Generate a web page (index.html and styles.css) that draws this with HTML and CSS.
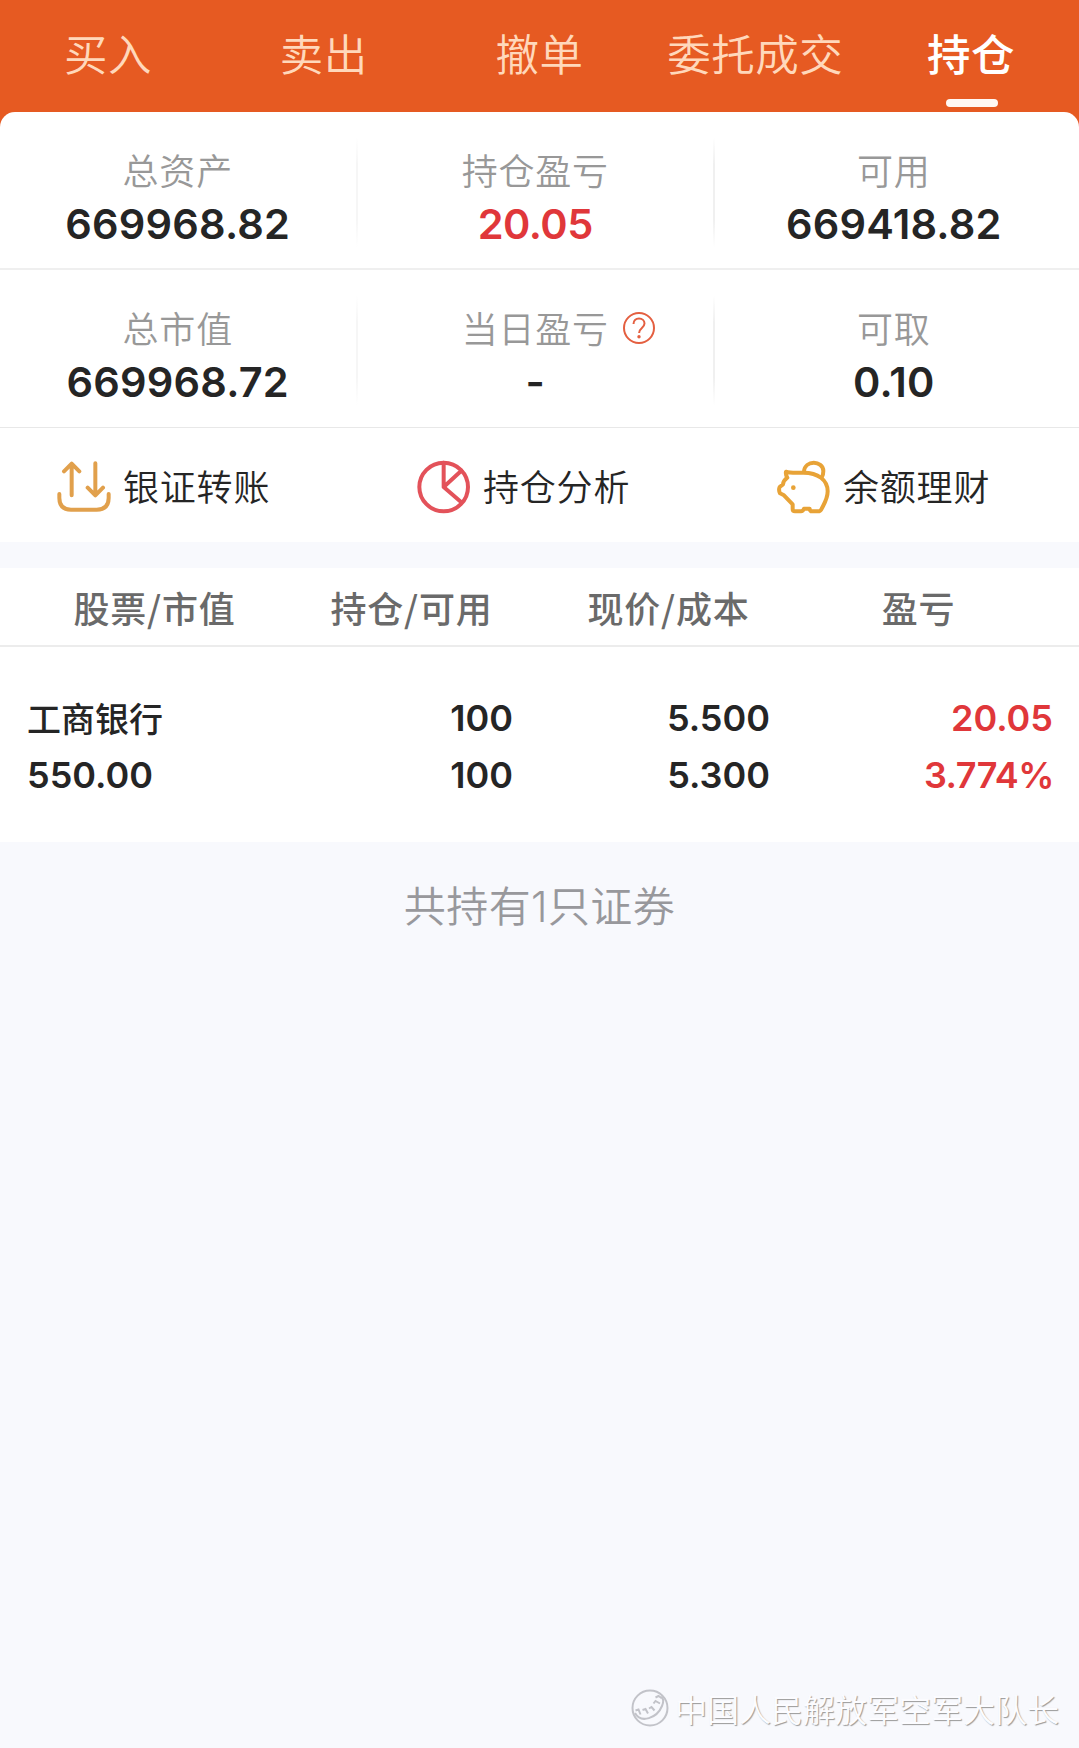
FILE: index.html
```html
<!DOCTYPE html>
<html lang="zh-CN">
<head>
<meta charset="utf-8">
<title>持仓</title>
<link rel="stylesheet" href="styles.css">
</head>
<body>
<header class="top">
  <nav class="tabs">
    <a class="tab">买入</a>
    <a class="tab">卖出</a>
    <a class="tab">撤单</a>
    <a class="tab">委托成交</a>
    <a class="tab tab-active">持仓</a>
  </nav>
</header>
<main>
  <section class="card">
    <div class="summary">
      <div class="cell"><span class="label">总资产</span><span class="value">669968.82</span></div>
      <div class="cell"><span class="label">持仓盈亏</span><span class="value up">20.05</span></div>
      <div class="cell"><span class="label">可用</span><span class="value">669418.82</span></div>
    </div>
    <div class="summary summary-second">
      <div class="cell"><span class="label">总市值</span><span class="value">669968.72</span></div>
      <div class="cell"><span class="label">当日盈亏<svg class="help" viewBox="0 0 34 34"><circle cx="17" cy="17" r="15"/><path d="M11.500 13c0-3.300 2.300-5.600 5.500-5.600s5.500 2.200 5.500 5.200c0 4.400-5.400 4.600-5.400 9.400"/><circle class="dot" cx="17" cy="25.700" r="1.700"/></svg></span><span class="value">-</span></div>
      <div class="cell"><span class="label">可取</span><span class="value">0.10</span></div>
    </div>
    <div class="tools">
      <a class="tool">
        <svg class="icon transfer" viewBox="45 57 168 168"><path d="M95 166V72M72 94l23-23 23 23M166 70v94M143 143l23 23 23-23M58 162v12q0 35 35 35h77q36 0 36-35v-12"/></svg>
        <span>银证转账</span>
      </a>
      <a class="tool">
        <svg class="icon pie" viewBox="45 57 168 168"><circle cx="131" cy="141" r="73"/><path d="M131 68v73l53-49M131 141l53 46"/></svg>
        <span>持仓分析</span>
      </a>
      <a class="tool">
        <svg class="icon pig" viewBox="45 57 168 168"><path d="M78 95c14 5 32 3 52 3 44 0 73 22 73 56 0 23-10 36-19 54q-3 6-10 6h-18q-6 0-7-8h-17q-3 8-9 8h-18q-7 0-7-7v-14l-26-27-12-6q-5-10-1-19l10-8c1-10 6-15 13-20q-6-10-4-18z"/><path d="M132 95c2-36 57-34 58-2q0 10-4 17"/><circle class="eye" cx="100" cy="143" r="7"/></svg>
        <span>余额理财</span>
      </a>
    </div>
  </section>
  <section class="holdings">
    <div class="thead"><span>股票/市值</span><span>持仓/可用</span><span>现价/成本</span><span>盈亏</span></div>
    <div class="row">
      <div class="col name"><span class="stock">工商银行</span><span>550.00</span></div>
      <div class="col"><span>100</span><span>100</span></div>
      <div class="col"><span>5.500</span><span>5.300</span></div>
      <div class="col up"><span>20.05</span><span class="percent">3.774%</span></div>
    </div>
  </section>
  <p class="total">共持有1只证券</p>
</main>
<footer class="mark">
  <svg class="logo" viewBox="0 0 38 38"><circle cx="19" cy="19" r="17.500"/><path d="M4 24c6 11 22 5 27-7 2-5 1-8-1-9"/><path class="teeth" d="M4.500 21.500l3-1 2 5M11.500 21l3-1 2.500 4.500M18 19.500l2.500-1.500 3 3.500M22.500 14.500l2-2.500 4.500 2.500M24.500 8.500l3-1.500 3 2"/></svg>
  <span>中国人民解放军空军大队长</span>
</footer>
</body>
</html>
```
FILE: styles.css
```css
* { box-sizing: border-box; }

body {
  margin: 0;
  min-height: 1748px;
  display: flex;
  flex-direction: column;
  background: #f8f9fd;
  color: #252525;
  font-family: Inter, "Noto Sans CJK SC", sans-serif;
}

.top {
  height: 128px;
  margin-bottom: -16px;
  background: #e65a22;
}

.tabs {
  display: grid;
  grid-template-columns: repeat(5, 1fr);
  height: 112px;
}

.tab {
  position: relative;
  height: 108px;
  line-height: 105px;
  text-align: center;
  font-family: "Noto Sans CJK SC", sans-serif;
  font-size: 43.5px;
  font-weight: 350;
  letter-spacing: 0.5px;
  color: #ffd8bb;
}

.tab-active {
  font-weight: 500;
  color: #fff;
}

.tab-active::after {
  content: "";
  position: absolute;
  left: calc(50% - 25px);
  bottom: 1px;
  width: 52px;
  height: 8px;
  border-radius: 4px;
  background: #fff8f4;
}

.card {
  position: relative;
  height: 430px;
  border-radius: 15px 15px 0 0;
  background: #fff;
}

.summary {
  display: grid;
  grid-template-columns: repeat(3, 357.5px);
  height: 158px;
  padding-top: 25px;
  border-bottom: 2px solid #efefef;
}

.summary-second { border-bottom-width: 1px; border-color: #e8e8e8; }

.cell {
  display: flex;
  flex-direction: column;
  align-items: center;
  height: 110px;
  padding-right: 2px;
  background: linear-gradient(#fff, #f0f0f0 25%, #f0f0f0 75%, #fff) right / 2px 100% no-repeat;
}

.cell:first-child {
  background-image: linear-gradient(#fff, #f6f6f6 25%, #f6f6f6 75%, #fff);
}

.cell:last-child {
  padding-right: 0;
  background: none;
}

.label {
  position: relative;
  margin-top: 10px;
  line-height: 50px;
  font-size: 36px;
  font-weight: 350;
  letter-spacing: 0.8px;
  color: #989898;
}

.value {
  margin-top: -1px;
  line-height: 56px;
  font-size: 41.5px;
  font-weight: 600;
  letter-spacing: 0.2px;
}

.value.up { letter-spacing: -0.5px; }

.up { color: #e0373a; }

.help {
  position: absolute;
  left: calc(100% + 13px);
  top: 6px;
  width: 34px;
  height: 34px;
  fill: none;
  stroke: #e45f40;
  stroke-width: 2;
}

.help .dot { fill: #e45f40; stroke: none; }

.tools {
  display: grid;
  grid-template-columns: 360px 360px 1fr;
  height: 114px;
  padding-left: 55px;
}

.tool {
  display: flex;
  align-items: center;
  gap: 12px;
  padding-top: 4px;
  font-size: 36px;
  font-weight: 350;
  letter-spacing: 0.8px;
}

.tool span { margin-top: -4px; }

.icon {
  width: 56px;
  height: 56px;
  fill: none;
  stroke-width: 12;
  stroke-linecap: round;
  stroke-linejoin: round;
}

.transfer { stroke: #e1a04c; }
.pie { stroke: #e3525a; }
.pig { stroke: #e8a337; }
.pig .eye { fill: #e8a337; stroke: none; }

.holdings {
  height: 274px;
  margin-top: 26px;
  background: #fff;
}

.thead {
  display: grid;
  grid-template-columns: 257px 257px 257px 243px;
  height: 79px;
  padding-left: 26px;
  border-bottom: 2px solid #ececec;
  line-height: 78px;
  font-family: "Noto Sans CJK SC", sans-serif;
  font-size: 36px;
  font-weight: 500;
  text-align: center;
  letter-spacing: 0.8px;
  color: #6a6a6a;
}

.row {
  display: grid;
  grid-template-columns: 229px 257px 257px 283px;
  padding: 43px 26px 0 27px;
  font-size: 36px;
  font-weight: 600;
}

.col {
  display: flex;
  flex-direction: column;
  align-items: flex-end;
  line-height: 57px;
}

.name { align-items: flex-start; }

.stock {
  height: 57px;
  line-height: 55px;
  font-family: "Noto Sans CJK SC", sans-serif;
  font-size: 34px;
  font-weight: 500;
}

.percent {
  margin-right: -1px;
  letter-spacing: -0.5px;
}

.total {
  margin: 35px 0 0;
  line-height: 60px;
  text-align: center;
  font-size: 42px;
  font-weight: 350;
  letter-spacing: 0.4px;
  color: #98989c;
}

.mark {
  display: flex;
  align-items: center;
  gap: 6px;
  margin: auto 0 0 631px;
  height: 80px;
  font-size: 32px;
  font-weight: 350;
  line-height: 40px;
  color: #fcfcff;
  text-shadow: 1px 1px 1px #999;
}

.mark span { padding-top: 5px; }

.logo {
  width: 38px;
  height: 38px;
  fill: none;
  stroke: #c2c3c9;
  stroke-width: 2;
}
```
